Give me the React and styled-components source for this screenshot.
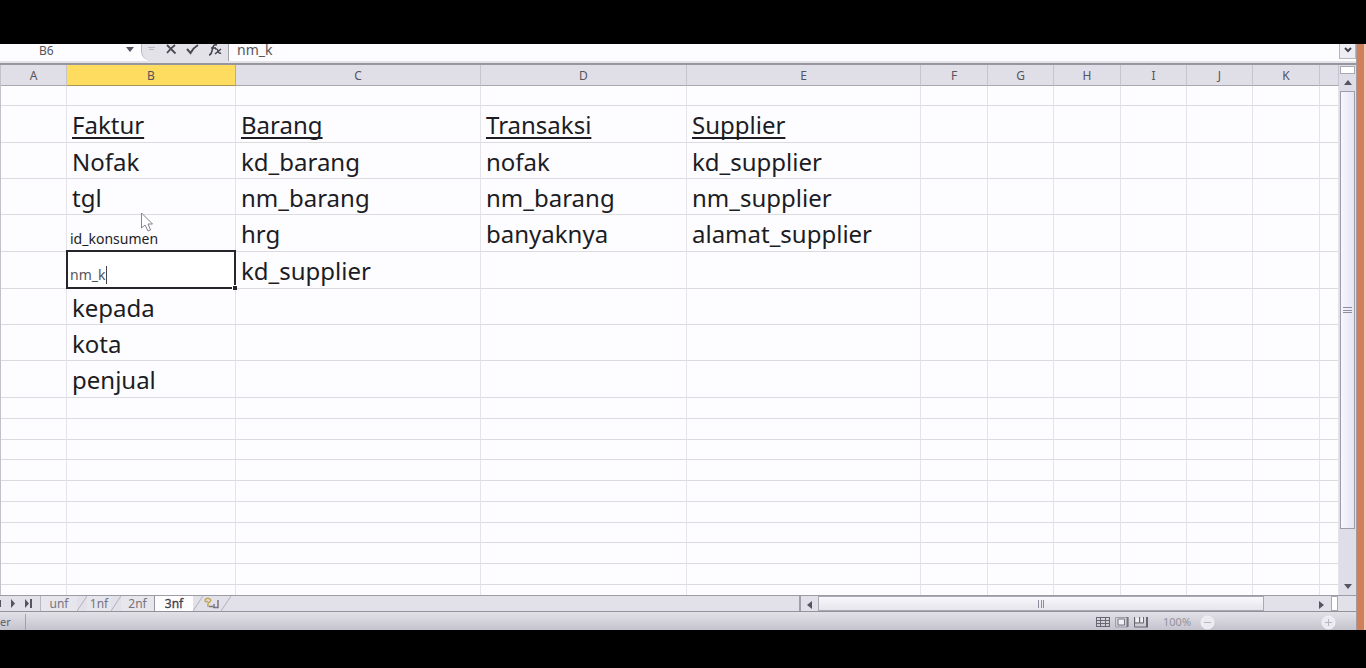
import React from "react";
import styled, { createGlobalStyle } from "styled-components";

const GlobalStyle = createGlobalStyle`
  *, *::before, *::after { box-sizing: border-box; }
  html, body { margin: 0; background: #000; }
  body { font-family: "Noto Sans", "Open Sans", sans-serif; color: #1c1c24; }
  button, input { font: inherit; color: inherit; border: 0; padding: 0; margin: 0; background: none; border-radius: 0; outline: 0; }
  svg { display: block; flex: none; }
`;

const Screen = styled.div`
  display: flex;
  height: 100vh;
  padding: 44px 0 38px;
  background: #000;
  overflow: hidden;
`;

const Desktop = styled.aside`
  flex: none;
  width: 10px;
  border-left: 1px solid #a89a9c;
  border-right: 2px solid #f2c9be;
  background: #d08058;
`;

const Workbook = styled.main`
  flex: 1;
  min-width: 0;
  display: flex;
  flex-direction: column;
  background: #e1e0e8;
`;

const FormulaBar = styled.div`
  flex: none;
  display: flex;
  align-items: flex-start;
  height: 17px;
  overflow: hidden;
  background: #fdfcff;
  font-size: 14px;
  line-height: 14px;
`;

const NameBox = styled.input`
  width: 124px;
  height: 12px;
  padding-left: 39px;
  color: #55555c;
  font-size: 12px;
  line-height: 12px;
`;

const DropButton = styled.button`
  display: flex;
  align-items: center;
  justify-content: center;
  width: 12px;
  height: 12px;
`;

const FormulaTools = styled.div`
  display: flex;
  align-items: flex-start;
  gap: 9px;
  width: 88px;
  height: 17px;
  margin-left: 5px;
  padding-left: 6px;
  border-right: 1px solid #a3a2aa;
  border-left: 1px solid #b9b8bf;
  border-bottom-left-radius: 10px;
  background: #e3e2e9;
`;

const ToolButton = styled.button`
  display: flex;
  align-items: center;
`;

const FormulaInput = styled.input`
  flex: 1;
  min-width: 0;
  height: 20px;
  margin-top: -4px;
  padding-left: 8px;
  color: #55555c;
  line-height: 20px;
`;

const ExpandButton = styled(DropButton)`
  width: 17px;
  height: 15px;
  border: 1px solid #b7b6bf;
  border-top: 0;
  background: #eeedf3;
`;

const Divider = styled.div`
  flex: none;
  height: 4px;
  border-bottom: 2px solid #97969f;
  background: #e4e3ea;
`;

const Body = styled.div`
  flex: 1;
  min-height: 0;
  display: flex;
`;

const SheetArea = styled.div`
  flex: 1;
  min-width: 0;
  position: relative;
  overflow: hidden;
  border-left: 1px solid #c3c2ca;
  background: #fdfcfe;
`;

const Grid = styled.table`
  width: 100%;
  table-layout: fixed;
  border-collapse: separate;
  border-spacing: 0;
`;

const HeadCell = styled.th`
  height: 21px;
  padding: 2px 0 0;
  border-right: 1px solid ${(p) => (p.$active ? "#d6a668" : "#c6c5ce")};
  border-bottom: 1px solid ${(p) => (p.$active ? "#a99650" : "#a9a8b1")};
  background: ${(p) => (p.$active ? "#fddc60" : "#e0dfe7")};
  color: #55545c;
  font-size: 12px;
  line-height: 18px;
  font-weight: 400;
`;

const Row = styled.tr`
  height: ${(p) => p.$height}px;
`;

const Cell = styled.td`
  height: inherit;
  padding: ${(p) => (p.$small ? "0 0 0 3px" : "2px 0 0 5px")};
  border-right: 1px solid #e4e3e9;
  border-bottom: 1px solid #dcdce0;
  vertical-align: ${(p) => (p.$small ? "bottom" : "middle")};
  font-size: ${(p) => (p.$small ? 14 : 24)}px;
  line-height: ${(p) => (p.$small ? 24 : 32)}px;
  white-space: nowrap;
`;

const Heading = styled.span`
  text-decoration: underline;
  text-decoration-thickness: 2px;
  text-underline-offset: 3px;
  text-decoration-skip-ink: none;
`;

const EditingCell = styled(Cell)`
  position: relative;
  padding: 0;
`;

const EditBox = styled.div`
  position: absolute;
  inset: -2px -1px -1px -1px;
  display: flex;
  align-items: flex-end;
  border: 2px solid #25252b;
  background: #fff;

  &::after {
    content: "";
    position: absolute;
    right: -3px;
    bottom: -3px;
    width: 5px;
    height: 5px;
    background: #25252b;
    border: 1px solid #fff;
    border-width: 1px 0 0 1px;
  }
`;

const EditInput = styled.input`
  width: 37px;
  height: 18px;
  margin: 0 0 3px 2px;
  border-right: 1px solid #44444a;
  color: #55555c;
  font-size: 14px;
  line-height: 18px;
`;

const Pointer = styled.svg`
  position: absolute;
  left: 139px;
  top: 147px;
`;

const VScroll = styled.div`
  flex: none;
  display: flex;
  flex-direction: column;
  width: 17px;
  background: #dedde8;
`;

const SplitGrip = styled.div`
  height: 8px;
  margin: 1px 1px 0;
  border: 1px solid #aaa9b3;
  background: #fff;
`;

const ScrollButton = styled.button`
  flex: none;
  display: flex;
  align-items: center;
  justify-content: center;
  width: 17px;
  height: 17px;
`;

const Track = styled.div`
  flex: 1;
  min-width: 0;
  min-height: 0;
  display: flex;
  flex-direction: ${(p) => (p.$vertical ? "column" : "row")};
`;

const Thumb = styled.div`
  display: flex;
  align-items: center;
  justify-content: center;
  flex: none;
  border: 1px solid #9d9ca8;
  ${(p) =>
    p.$vertical
      ? "height: 90%; margin: 0 1px; background: linear-gradient(90deg, #f8f7ff, #e5e4f2);"
      : "width: 90%; background: linear-gradient(#f8f7fb, #e6e5ec); border-color: #aaa9b3;"}
`;

const BottomBar = styled.div`
  flex: none;
  display: flex;
  height: 17px;
  border-top: 1px solid #9d9ca5;
  border-bottom: 1px solid #92919b;
  background: #e2e1ea;
`;

const TabStrip = styled.div`
  flex: 800;
  min-width: 0;
  display: flex;
  align-items: stretch;
  border-right: 2px solid #a09fa9;
`;

const SheetNav = styled.div`
  display: flex;
  align-items: center;
  width: 41px;
  border-right: 1px solid #b9b8c1;
`;

const Tab = styled.button`
  display: flex;
  align-items: center;
  justify-content: center;
  width: ${(p) => p.$width}px;
  border-right: ${(p) => (p.$edge ? "1px solid #9594a0" : "0")};
  background: ${(p) => (p.$active ? "#fdfcff" : "#e7e6ed")};
  color: ${(p) => (p.$active ? "#3f3e49" : "#75747f")};
  -webkit-text-stroke: ${(p) => (p.$active ? "0.3px" : "0")};
  font-size: 12px;
  line-height: 15px;
`;

const HScroll = styled.div`
  flex: 538;
  min-width: 0;
  display: flex;
`;

const EndGrip = styled.div`
  width: 7px;
  margin: 0 1px;
  border: 1px solid #aaa9b3;
  background: #fff;
`;

const Corner = styled.div`
  flex: none;
  width: 17px;
`;

const StatusBar = styled.footer`
  flex: none;
  display: flex;
  align-items: center;
  justify-content: space-between;
  height: 18px;
  padding: 2px 20px 0 0;
  background: linear-gradient(#e2e1e7, #c5c4ce);
  color: #5f5e68;
  font-size: 11px;
  line-height: 16px;
`;

const Mode = styled.span`
  width: 26px;
  border-right: 1px solid #a3a2ac;
`;

const ViewTools = styled.div`
  display: flex;
  align-items: center;
  gap: 5px;
`;

const ZoomLabel = styled.span`
  width: 32px;
  margin-left: 9px;
  color: #94939d;
`;

const ZoomTrack = styled.div`
  width: 96px;
  height: 1px;
  background: #d3d2da;
`;

const columns = [
  ["A", 66], ["B", 169], ["C", 245], ["D", 206], ["E", 234], ["F", 67],
  ["G", 66], ["H", 67], ["I", 66], ["J", 66], ["K", 67], ["", null],
];

const rows = [
  [20],
  [37, "Faktur", "Barang", "Transaksi", "Supplier"],
  [36, "Nofak", "kd_barang", "nofak", "kd_supplier"],
  [36, "tgl", "nm_barang", "nm_barang", "nm_supplier"],
  [37, "id_konsumen", "hrg", "banyaknya", "alamat_supplier"],
  [37, "nm_k", "kd_supplier"],
  [36, "kepada"],
  [36, "kota"],
  [37, "penjual"],
  [21], [21], [20], [21], [21], [21], [20], [21], [21], [21],
];

const arrows = {
  up: "M0 6 L4 1 L8 6Z",
  down: "M0 1 L8 1 L4 6Z",
  left: "M6 0 L6 8 L1 4Z",
  right: "M1 0 L6 4 L1 8Z",
};

function Arrow({ to, size = 8 }) {
  return (
    <svg width={size} height={size} viewBox="0 0 8 8" fill="#55545f" aria-hidden="true">
      <path d={arrows[to]} />
    </svg>
  );
}

function Slash() {
  return (
    <svg width="10" height="15" viewBox="0 0 10 15" aria-hidden="true">
      <path d="M0 15 L10 0" stroke="#b2b1bc" fill="none" />
    </svg>
  );
}

function SheetCell({ row, col, value }) {
  if (row === 5 && col === 1) {
    return (
      <EditingCell>
        <EditBox>
          <EditInput aria-label="Cell B6" defaultValue={value} />
        </EditBox>
      </EditingCell>
    );
  }
  return (
    <Cell $small={row === 4 && col === 1}>
      {row === 1 && value ? <Heading>{value}</Heading> : value}
    </Cell>
  );
}

function ZoomButton({ plus }) {
  return (
    <ToolButton aria-label={plus ? "Zoom in" : "Zoom out"}>
      <svg width="15" height="15" viewBox="0 0 15 15" fill="#ecebf2" stroke="#b6b5c0">
        <circle cx="7.5" cy="7.5" r="6.5" stroke="#f3f2f7" />
        <path d={plus ? "M4 7.5H11M7.5 4V11" : "M4 7.5H11"} />
      </svg>
    </ToolButton>
  );
}

export default function App() {
  return (
    <>
      <GlobalStyle />
      <Screen>
        <Workbook>
          <FormulaBar>
            <NameBox aria-label="Name box" defaultValue="B6" />
            <DropButton aria-label="Cell names"><Arrow to="down" /></DropButton>
            <FormulaTools>
              <svg width="9" height="10" viewBox="0 0 9 10" stroke="#bab9c2" aria-hidden="true">
                <path d="M0 3.5H7M1 5.5H6" />
              </svg>
              <ToolButton aria-label="Cancel">
                <svg width="11" height="11" viewBox="0 0 11 11" fill="none" stroke="#4c4b55" strokeWidth="1.8">
                  <path d="M1 1 L9.500 9.500 M9 1 Q5 4 1 9" />
                </svg>
              </ToolButton>
              <ToolButton aria-label="Enter">
                <svg width="13" height="11" viewBox="0 0 13 11" fill="none" stroke="#4c4b55" strokeWidth="2">
                  <path d="M1 5 L4.500 9 Q7 4 12 1" />
                </svg>
              </ToolButton>
              <ToolButton aria-label="Insert function">
                <svg width="14" height="13" viewBox="0 0 14 13" fill="none" stroke="#44434d" strokeWidth="1.500">
                  <path d="M1 11 Q3 11 4 7 L5 3 Q6 0 9 1 M3 4H8 M7 5 Q9 4 10 7 T13 9 M13 5 L7 10" />
                </svg>
              </ToolButton>
            </FormulaTools>
            <FormulaInput aria-label="Formula" defaultValue="nm_k" />
            <ExpandButton aria-label="Expand formula bar">
              <svg width="8" height="8" viewBox="0 0 8 8" fill="none" stroke="#44434d" strokeWidth="2">
                <path d="M1 1 L4 4 L7 1" />
              </svg>
            </ExpandButton>
          </FormulaBar>
          <Divider />

          <Body>
            <SheetArea>
              <Grid>
                <colgroup>
                  {columns.map(([name, width], i) => (
                    <col key={i} width={width ?? undefined} />
                  ))}
                </colgroup>
                <thead>
                  <tr>
                    {columns.map(([name], i) => (
                      <HeadCell key={i} scope="col" $active={name === "B"}>{name}</HeadCell>
                    ))}
                  </tr>
                </thead>
                <tbody>
                  {rows.map(([height, ...values], r) => (
                    <Row key={r} $height={height}>
                      {columns.map((_, c) => (
                        <SheetCell key={c} row={r} col={c} value={values[c - 1]} />
                      ))}
                    </Row>
                  ))}
                </tbody>
              </Grid>
              <Pointer width="14" height="21" viewBox="0 0 14 21" aria-hidden="true">
                <path d="M1.500 1 V16 L5 13 L8 19 L10.500 18 L8 12 H12.500 Z" fill="#fff" stroke="#85848c" />
              </Pointer>
            </SheetArea>
            <VScroll>
              <SplitGrip />
              <ScrollButton aria-label="Scroll up"><Arrow to="up" /></ScrollButton>
              <Track $vertical>
                <Thumb $vertical>
                  <svg width="9" height="7" viewBox="0 0 9 7" stroke="#8e8d99" aria-hidden="true">
                    <path d="M0 .5H9M0 3.500H9M0 5.500H9" />
                  </svg>
                </Thumb>
              </Track>
              <ScrollButton aria-label="Scroll down"><Arrow to="down" /></ScrollButton>
            </VScroll>
          </Body>

          <BottomBar>
            <TabStrip>
              <SheetNav>
                <svg width="33" height="9" viewBox="0 0 33 9" fill="#55545f" aria-label="Sheet navigation">
                  <path d="M0 1H1V8H0ZM11 0L15 4.500L11 9ZM25 0L29 4.500L25 9ZM30 0H32V9H30Z" />
                </svg>
              </SheetNav>
              <Tab $width={36}>unf</Tab>
              <Slash />
              <Tab $width={24}>1nf</Tab>
              <Slash />
              <Tab $width={34} $edge>2nf</Tab>
              <Tab $width={38} $active>3nf</Tab>
              <Slash />
              <ToolButton aria-label="Insert worksheet">
                <svg width="18" height="15" viewBox="0 0 18 15" fill="none" strokeWidth="1.500">
                  <path d="M6 10.500H10M10 11.500H15V4" stroke="#777683" />
                  <path d="M11 8V12" stroke="#777683" />
                  <path d="M5 7V11M5 7 Q9 5 7 3 Q4 1 2 4 Q2 7 5 5" stroke="#c4a553" />
                </svg>
              </ToolButton>
              <Slash />
            </TabStrip>
            <HScroll>
              <ScrollButton aria-label="Scroll left"><Arrow to="left" /></ScrollButton>
              <Track>
                <Thumb>
                  <svg width="6" height="8" viewBox="0 0 6 8" stroke="#8e8d99" aria-hidden="true">
                    <path d="M.5 0V8M3.500 0V8M5.500 0V8" />
                  </svg>
                </Thumb>
              </Track>
              <ScrollButton aria-label="Scroll right"><Arrow to="right" /></ScrollButton>
              <EndGrip />
            </HScroll>
            <Corner />
          </BottomBar>

          <StatusBar>
            <Mode>er</Mode>
            <ViewTools>
              <ToolButton aria-label="Normal view">
                <svg width="14" height="12" viewBox="0 0 14 12" fill="none" stroke="#686771">
                  <path d="M0 1.500H14M0 4.500H14M0 7.500H14M0 10.500H14M.5 1V11M4.500 1V11M9.500 1V11M13.500 1V11" />
                </svg>
              </ToolButton>
              <ToolButton aria-label="Page layout view">
                <svg width="14" height="12" viewBox="0 0 14 12" fill="none" stroke="#777681">
                  <path d="M.5 1.500H13V11H.5Z" stroke="#a09fa9" />
                  <path d="M3 3H9.500V9H3Z" fill="#f2f1f6" />
                  <path d="M12.500 1V11" strokeWidth="2" />
                </svg>
              </ToolButton>
              <ToolButton aria-label="Page break preview">
                <svg width="15" height="12" viewBox="0 0 15 12" fill="none" stroke="#686771">
                  <path d="M.5 1V11H14M5.500 1V7H1M9.500 1V7H6" />
                  <path d="M13 1V11" strokeWidth="2" />
                  <path d="M2 2H5V6H2ZM7 2H9V6H7Z" fill="#f2f1f6" stroke="none" />
                </svg>
              </ToolButton>
              <ZoomLabel>100%</ZoomLabel>
              <ZoomButton />
              <ZoomTrack />
              <ZoomButton plus />
            </ViewTools>
          </StatusBar>
        </Workbook>
        <Desktop />
      </Screen>
    </>
  );
}
